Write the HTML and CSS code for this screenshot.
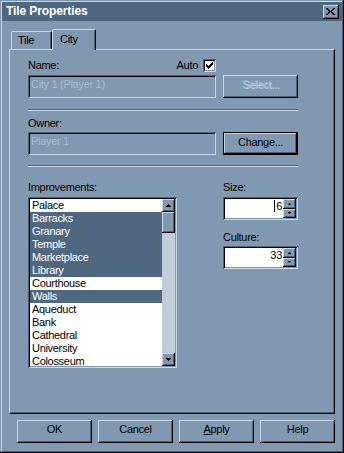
FILE: index.html
```html
<!DOCTYPE html>
<html>
<head>
<meta charset="utf-8">
<title>Tile Properties</title>
<link rel="stylesheet" href="styles.css">
</head>
<body>
<div class="window">
  <div class="titlebar">
    <span class="title">Tile Properties</span>
    <span class="close raised">
      <svg width="9" height="7" viewBox="0 0 9 7" shape-rendering="crispEdges"><path fill="#000" d="M0 0h2v1H0zM7 0h2v1H7zM1 1h2v1H1zM6 1h2v1H6zM2 2h2v1H2zM5 2h2v1H5zM3 3h3v1H3zM2 4h2v1H2zM5 4h2v1H5zM1 5h2v1H1zM6 5h2v1H6zM0 6h2v1H0zM7 6h2v1H7z"/></svg>
    </span>
  </div>
  <div class="content">
    <div class="tabs">
      <div class="tab">Tile</div>
      <div class="tab active">City</div>
    </div>
    <div class="panel">
      <div class="label-row name-row">
        <span>Name:</span>
        <span class="auto">Auto
          <span class="checkbox">
            <svg width="7" height="7" viewBox="0 0 7 7" shape-rendering="crispEdges"><path fill="#000" d="M6 0h1v1H6zM5 1h2v1H5zM0 2h1v1H0zM4 2h3v1H4zM0 3h2v1H0zM3 3h3v1H3zM0 4h5v1H0zM1 5h3v1H1zM2 6h1v1H2z"/></svg>
          </span>
        </span>
      </div>
      <div class="field-row first">
        <div class="field sunken disabled">City 1 (Player 1)</div>
        <div class="btn raised disabled-btn">Select...</div>
      </div>
      <div class="sep"></div>
      <div class="label-row owner-label">Owner:</div>
      <div class="field-row second">
        <div class="field sunken disabled">Player 1</div>
        <div class="btn raised default">Change...</div>
      </div>
      <div class="sep"></div>
      <div class="lower">
        <div class="left-col">
          <div class="label-row">Improvements:</div>
          <div class="listbox sunken">
            <div class="items">
              <div class="item">Palace</div>
              <div class="item sel">Barracks</div>
              <div class="item sel">Granary</div>
              <div class="item sel">Temple</div>
              <div class="item sel">Marketplace</div>
              <div class="item sel">Library</div>
              <div class="item">Courthouse</div>
              <div class="item sel">Walls</div>
              <div class="item">Aqueduct</div>
              <div class="item">Bank</div>
              <div class="item">Cathedral</div>
              <div class="item">University</div>
              <div class="item">Colosseum</div>
            </div>
            <div class="scrollbar">
              <div class="sbtn raised"><svg width="5" height="3" viewBox="0 0 5 3" shape-rendering="crispEdges"><path fill="#000" d="M2 0h1v1H2zM1 1h3v1H1zM0 2h5v1H0z"/></svg></div>
              <div class="thumb raised"></div>
              <div class="track"></div>
              <div class="sbtn raised"><svg width="5" height="3" viewBox="0 0 5 3" shape-rendering="crispEdges"><path fill="#000" d="M0 0h5v1H0zM1 1h3v1H1zM2 2h1v1H2z"/></svg></div>
            </div>
          </div>
        </div>
        <div class="right-col">
          <div class="label-row">Size:</div>
          <div class="spin sunken">
            <div class="spin-text"><span class="caret"></span>6</div>
            <div class="spin-btns">
              <div class="spbtn raised"><svg width="3" height="2" viewBox="0 0 3 2" shape-rendering="crispEdges"><path fill="#000" d="M1 0h1v1H1zM0 1h3v1H0z"/></svg></div>
              <div class="spbtn raised"><svg width="3" height="2" viewBox="0 0 3 2" shape-rendering="crispEdges"><path fill="#000" d="M0 0h3v1H0zM1 1h1v1H1z"/></svg></div>
            </div>
          </div>
          <div class="label-row culture-label">Culture:</div>
          <div class="spin sunken">
            <div class="spin-text">33</div>
            <div class="spin-btns">
              <div class="spbtn raised"><svg width="3" height="2" viewBox="0 0 3 2" shape-rendering="crispEdges"><path fill="#000" d="M1 0h1v1H1zM0 1h3v1H0z"/></svg></div>
              <div class="spbtn raised"><svg width="3" height="2" viewBox="0 0 3 2" shape-rendering="crispEdges"><path fill="#000" d="M0 0h3v1H0zM1 1h1v1H1z"/></svg></div>
            </div>
          </div>
        </div>
      </div>
    </div>
    <div class="buttons">
      <div class="btn raised">OK</div>
      <div class="btn raised">Cancel</div>
      <div class="btn raised"><u>A</u>pply</div>
      <div class="btn raised">Help</div>
    </div>
  </div>
</div>
</body>
</html>
```

FILE: styles.css
```css
:root {
  --face: #8098b0;
  --hi: #c8d8e8;
  --sh: #506478;
  --dk: #000000;
  --title: #4f6680;
  --sel: #506780;
  --track: #c0ccd8;
  --dis: #a8bccf;
}

* { box-sizing: border-box; }

html, body {
  margin: 0;
  padding: 0;
  background: var(--face);
}

body {
  font-family: "Liberation Sans", Arial, sans-serif;
  font-size: 11px;
  letter-spacing: -0.3px;
  color: #000;
}

.raised {
  background: var(--face);
  box-shadow: inset -1px -1px var(--dk), inset 1px 1px var(--hi), inset -2px -2px var(--sh);
}

.sunken {
  box-shadow: inset 1px 1px var(--sh), inset -1px -1px var(--hi), inset 2px 2px var(--dk), inset -2px -2px var(--face);
}

.window {
  width: 344px;
  height: 453px;
  padding: 2px;
  background: var(--face);
  box-shadow: inset -1px -1px var(--dk), inset 1px 1px var(--face), inset -2px -2px var(--sh), inset 2px 2px var(--hi);
  display: flex;
  flex-direction: column;
}

.titlebar {
  height: 19px;
  background: var(--title);
  display: flex;
  align-items: center;
  justify-content: space-between;
  padding: 0 3px 0 4px;
}

.title {
  color: #fff;
  font-weight: bold;
  font-size: 12px;
  letter-spacing: -0.1px;
  line-height: 19px;
}

.close {
  width: 16px;
  height: 14px;
  display: flex;
  align-items: center;
  justify-content: center;
  padding-right: 1px;
}

.content {
  padding: 8px 7px 0 7px;
  display: flex;
  flex-direction: column;
}

.tabs {
  height: 20px;
  display: flex;
  align-items: flex-end;
  padding-left: 2px;
}

.tab {
  height: 18px;
  width: 41px;
  border-top: 1px solid var(--hi);
  border-left: 1px solid var(--hi);
  border-right: 1px solid var(--dk);
  border-top-left-radius: 2px;
  border-top-right-radius: 2px;
  box-shadow: inset -1px 0 var(--sh);
  padding: 2px 0 0 6px;
  line-height: 13px;
  background: var(--face);
}

.tab.active {
  height: 21px;
  width: 44px;
  margin-bottom: -1px;
  position: relative;
  z-index: 1;
  padding: 3px 0 0 7px;
}

.panel {
  height: 365px;
  border-style: solid;
  border-width: 1px;
  border-color: var(--hi) var(--dk) var(--dk) var(--hi);
  box-shadow: inset -1px -1px var(--sh);
  padding: 9px 0 0 18px;
  display: flex;
  flex-direction: column;
}

.label-row {
  height: 13px;
  line-height: 13px;
  white-space: nowrap;
}

.name-row {
  width: 188px;
  display: flex;
  justify-content: space-between;
}

.auto {
  display: flex;
  align-items: center;
  gap: 5px;
}

.checkbox {
  width: 13px;
  height: 13px;
  background: #fff;
  box-shadow: inset 1px 1px var(--sh), inset -1px -1px var(--hi), inset 2px 2px var(--dk), inset -2px -2px var(--face);
  display: flex;
  align-items: center;
  justify-content: center;
}

.field-row {
  display: flex;
  gap: 7px;
  height: 23px;
}

.field-row.first { margin-top: 3px; }
.field-row.second { margin-top: 2px; }

.field {
  width: 188px;
  height: 23px;
  padding: 3px 0 0 3px;
  line-height: 13px;
  white-space: nowrap;
}

.disabled { color: var(--dis); }

.btn {
  width: 75px;
  height: 23px;
  display: flex;
  align-items: center;
  justify-content: center;
  padding-bottom: 4px;
  line-height: 13px;
  white-space: nowrap;
}

.disabled-btn {
  color: #a4b8cc;
  text-shadow: 1px 1px #c4d4e4;
}

.btn.default {
  border: 1px solid var(--dk);
  padding-bottom: 2px;
}

.sep {
  width: 270px;
  height: 2px;
  margin-top: 11px;
  border-top: 1px solid var(--sh);
  border-bottom: 1px solid var(--hi);
}

.field-row.second + .sep { margin-top: 10px; }

.owner-label { margin-top: 6px; }

.lower {
  display: flex;
  margin-top: 14px;
}

.left-col {
  width: 149px;
  display: flex;
  flex-direction: column;
}

.listbox {
  margin-top: 3px;
  height: 171px;
  width: 149px;
  background: #fff;
  padding: 2px;
  display: flex;
}

.items {
  flex: 1;
  overflow: hidden;
}

.item {
  height: 13px;
  line-height: 13px;
  padding-left: 2px;
  white-space: nowrap;
}

.item.sel {
  background: var(--sel);
  color: #fff;
}

.scrollbar {
  width: 13px;
  display: flex;
  flex-direction: column;
  background: var(--track);
}

.sbtn {
  height: 13px;
  display: flex;
  align-items: center;
  justify-content: center;
}

.thumb { height: 21px; }

.track { flex: 1; }

.right-col {
  margin-left: 46px;
  width: 75px;
  display: flex;
  flex-direction: column;
}

.spin {
  margin-top: 3px;
  width: 75px;
  height: 23px;
  background: #fff;
  padding: 2px;
  display: flex;
}

.culture-label { margin-top: 11px; }
.culture-label + .spin { margin-top: 2px; }

.spin-text {
  flex: 1;
  text-align: right;
  line-height: 13px;
  padding: 1px 1px 0 0;
  display: flex;
  justify-content: flex-end;
  align-items: flex-start;
}

.caret {
  display: inline-block;
  width: 1px;
  height: 12px;
  background: #000;
  margin-top: 0;
  margin-right: 1px;
}

.spin-btns {
  width: 13px;
  display: flex;
  flex-direction: column;
}

.spbtn {
  flex: 1;
  display: flex;
  align-items: center;
  justify-content: center;
}

.buttons {
  margin-top: 6px;
  display: flex;
  justify-content: flex-end;
  gap: 6px;
}
```
